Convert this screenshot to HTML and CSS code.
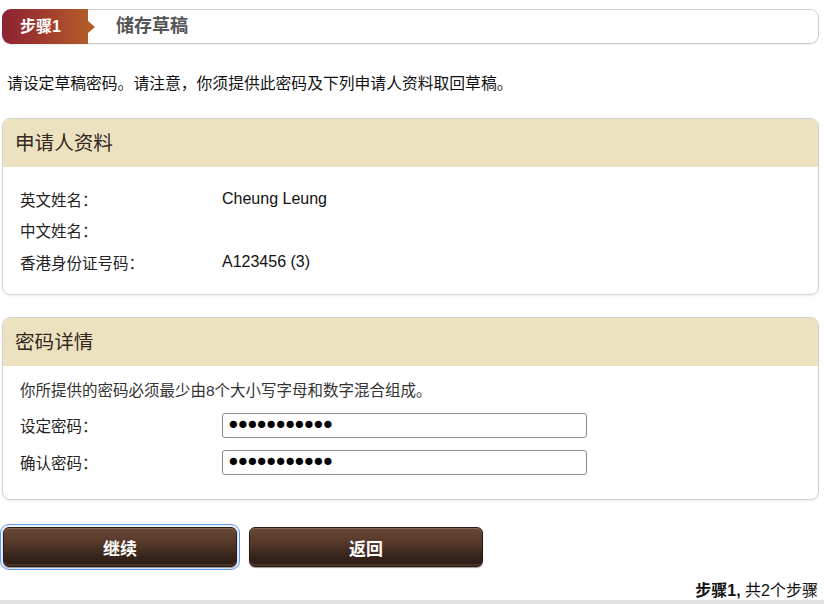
FILE: index.html
```html
<!DOCTYPE html>
<html lang="zh-CN">
<head>
<meta charset="utf-8">
<title>储存草稿</title>
<link rel="stylesheet" href="styles.css">
</head>
<body>
<div class="page">
  <div class="stepbar">
    <div class="step-badge">步骤1</div>
    <div class="step-title">储存草稿</div>
  </div>

  <p class="intro">请设定草稿密码。请注意，你须提供此密码及下列申请人资料取回草稿。</p>

  <section class="panel first">
    <h2 class="panel-head">申请人资料</h2>
    <div class="panel-body info-body">
      <div class="row"><span class="label">英文姓名：</span><span class="value">Cheung Leung</span></div>
      <div class="row"><span class="label">中文姓名：</span><span class="value"></span></div>
      <div class="row"><span class="label">香港身份证号码：</span><span class="value">A123456 (3)</span></div>
    </div>
  </section>

  <section class="panel">
    <h2 class="panel-head">密码详情</h2>
    <div class="panel-body pw-body">
      <p class="note">你所提供的密码必须最少由8个大小写字母和数字混合组成。</p>
      <div class="field"><label class="label" for="pw1">设定密码：</label><input id="pw1" class="pw" type="password" value="abcdefghijk"></div>
      <div class="field"><label class="label" for="pw2">确认密码：</label><input id="pw2" class="pw" type="password" value="abcdefghijk"></div>
    </div>
  </section>

  <div class="actions">
    <button class="btn focused" type="button">继续</button>
    <button class="btn" type="button">返回</button>
  </div>

  <div class="footer"><b>步骤1,</b> 共2个步骤</div>
</div>
<div class="bottom-line"></div>
</body>
</html>
```

FILE: styles.css
```css
html, body {
  margin: 0;
  padding: 0;
  background: #fff;
}
body {
  font-family: "Liberation Sans", "Noto Sans CJK SC", sans-serif;
  color: #111;
  width: 824px;
  height: 604px;
  overflow: hidden;
  position: relative;
}
.page {
  margin-left: 2px;
  width: 817px;
  padding-top: 9px;
}

/* step bar */
.stepbar {
  display: flex;
  align-items: stretch;
  height: 33px;
  border: 1px solid #cfcfcf;
  border-left: none;
  border-radius: 9px;
  box-shadow: 0 1px 1px rgba(0,0,0,0.08);
}
.step-badge {
  position: relative;
  width: 86px;
  margin: -1px 0;
  border-radius: 9px 0 0 9px;
  background: linear-gradient(90deg, #8e2233 0%, #a03c2e 50%, #b25c28 100%);
  color: #fff;
  font-weight: bold;
  font-size: 16px;
  line-height: 35px;
  padding-left: 18px;
  box-sizing: border-box;
}
.step-badge::after {
  content: "";
  position: absolute;
  right: -7px;
  top: 12px;
  border-left: 7px solid #b25c28;
  border-top: 6px solid transparent;
  border-bottom: 6px solid transparent;
}
.step-title {
  padding-left: 28px;
  font-size: 18px;
  font-weight: bold;
  color: #555;
  line-height: 33px;
}

.intro {
  margin: 29px 0 0 5px;
  font-size: 15.8px;
  line-height: 22px;
  height: 22px;
}

/* panels */
.panel {
  margin-top: 22px;
  border: 1px solid #d3d3d3;
  border-radius: 8px;
  overflow: hidden;
  box-shadow: 0 1px 2px rgba(0,0,0,0.08);
}
.panel.first {
  margin-top: 23px;
}
.panel-head {
  margin: 0;
  background: #ede2bf;
  height: 48px;
  line-height: 48px;
  padding-left: 12px;
  font-size: 19.6px;
  font-weight: normal;
  color: #33281f;
}
.info-body {
  padding: 16px 0 16px 17px;
}
.row {
  display: flex;
  height: 31.5px;
  align-items: center;
}
.label {
  width: 202px;
  flex: none;
  font-size: 15.5px;
  color: #222;
}
.value {
  font-size: 16px;
  color: #111;
}

.pw-body {
  padding: 15px 0 24px 17px;
}
.note {
  margin: 0;
  font-size: 15.5px;
  line-height: 20px;
  color: #333;
}
.field {
  display: flex;
  align-items: center;
  margin-top: 12px;
}
.pw {
  width: 365px;
  height: 25px;
  box-sizing: border-box;
  border: 1px solid #8a8797;
  border-radius: 3px;
  padding: 0 3px;
  font-family: "DejaVu Sans", sans-serif;
  font-size: 25px;
  line-height: 23px;
  letter-spacing: -5.3px;
  color: #000;
  background: #fff;
}

/* buttons */
.actions {
  display: flex;
  gap: 12px;
  margin-top: 27px;
  padding-left: 1px;
}
.btn {
  width: 234px;
  height: 40px;
  border: 1px solid #2a1b14;
  border-radius: 6px;
  background: linear-gradient(180deg, #6a4837 0%, #553829 40%, #36241b 75%, #2a1c16 100%);
  box-shadow: inset 0 1px 0 rgba(255,255,255,0.18), inset 0 -2px 0 #4a3226, 0 1px 1px rgba(0,0,0,0.4);
  color: #fff;
  font-family: "Noto Sans CJK SC", serif;
  font-size: 17px;
  font-weight: bold;
  padding-top: 2px;
  cursor: pointer;
}
.btn.focused {
  outline: 1px solid #5f9bf5;
  outline-offset: 2px;
  box-shadow: inset 0 1px 0 rgba(255,255,255,0.18), inset 0 -2px 0 #4a3226, 0 1px 1px rgba(0,0,0,0.4), 0 0 0 3px rgba(120,170,255,0.15);
}

.footer {
  text-align: right;
  margin-top: 14px;
  padding-right: 1px;
  font-size: 16px;
  line-height: 20px;
  color: #111;
}
.footer b {
  font-weight: bold;
}

.bottom-line {
  position: absolute;
  left: 0;
  right: 0;
  bottom: 0;
  height: 4px;
  background: #e2e2e2;
}
```
